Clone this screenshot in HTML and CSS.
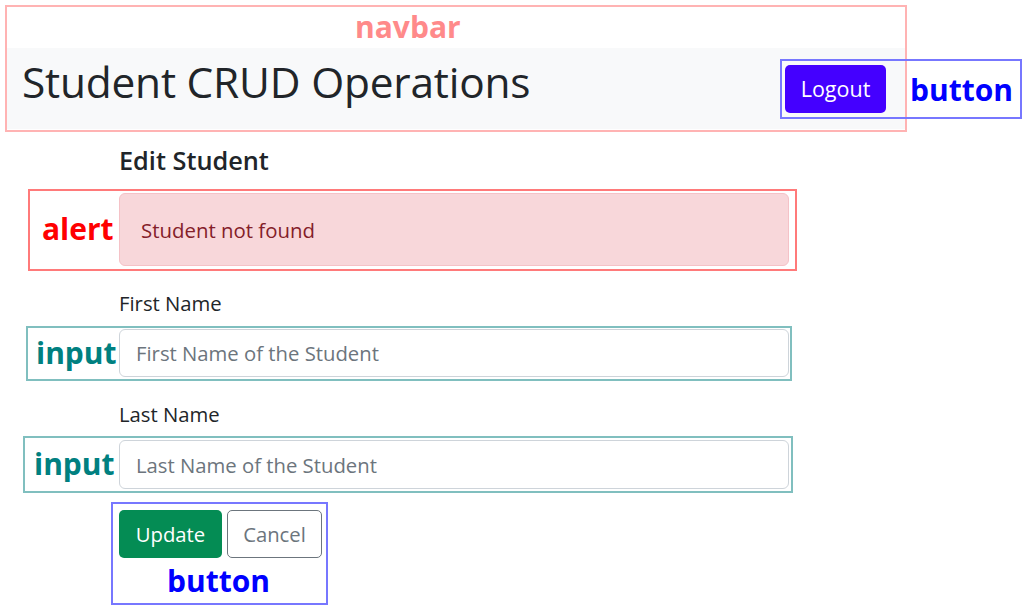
FILE: index.html
```html
<!DOCTYPE html>
<html>
<head>
<meta charset="utf-8">
<link rel="stylesheet" href="styles.css">
</head>
<body>
<div class="page">
  <nav class="navbar">
    <h1 class="brand">Student CRUD Operations</h1>
    <button class="btn btn-logout">Logout</button>
  </nav>
  <main class="content">
    <h2 class="title">Edit Student</h2>
    <div class="alert">Student not found</div>
    <label class="label">First Name</label>
    <input class="field" type="text" placeholder="First Name of the Student">
    <label class="label">Last Name</label>
    <input class="field field-last" type="text" placeholder="Last Name of the Student">
    <div class="actions">
      <button class="btn btn-update">Update</button>
      <button class="btn btn-cancel">Cancel</button>
    </div>
  </main>

  <div class="anno anno-navbar"><span class="anno-label lbl-navbar">navbar</span></div>
  <div class="anno anno-logout"><span class="anno-label lbl-logout">button</span></div>
  <div class="anno anno-alert"><span class="anno-label lbl-alert">alert</span></div>
  <div class="anno anno-input1"><span class="anno-label lbl-input1">input</span></div>
  <div class="anno anno-input2"><span class="anno-label lbl-input2">input</span></div>
  <div class="anno anno-actions"><span class="anno-label lbl-actions">button</span></div>
</div>
</body>
</html>
```

FILE: styles.css
```css
* { box-sizing: border-box; }
html, body { margin: 0; padding: 0; background: #fff; }
body {
  font-family: "Open Sans", "Noto Sans", sans-serif;
  color: #212529;
  width: 1026px;
  height: 609px;
  overflow: hidden;
}
.page {
  position: relative;
  width: 1026px;
  height: 609px;
  padding-top: 48px;
}

.navbar {
  margin-left: 7px;
  width: 898px;
  height: 81px;
  background: #f8f9fa;
  display: flex;
  align-items: center;
  justify-content: space-between;
  padding: 0 19px 0 15px;
}
.brand {
  margin: 0 0 12px 0;
  font-size: 42.4px;
  font-weight: 400;
  line-height: 1.2;
  letter-spacing: -0.2px;
}
.btn {
  font-family: inherit;
  font-size: 20.3px;
  line-height: 1.5;
  border-radius: 5px;
  border: 1px solid transparent;
  height: 48px;
  padding: 0;
  cursor: pointer;
}
.btn-logout {
  background: #4400ff;
  color: #fff;
  width: 101px;
  margin-top: 1px;
  font-size: 21.5px;
}

.content {
  margin-left: 119px;
  width: 670px;
  display: flex;
  flex-direction: column;
  align-items: flex-start;
}
.title {
  margin: 16px 0 0 0;
  font-size: 25.3px;
  font-weight: 600;
  line-height: 30px;
}
.alert {
  margin-top: 18px;
  width: 670px;
  height: 73px;
  background: #f8d7da;
  border: 1px solid #f5c2c7;
  border-radius: 6px;
  color: #842029;
  font-size: 20.4px;
  display: flex;
  align-items: center;
  padding: 0 21px;
}
.label {
  margin-top: 23px;
  font-size: 20.3px;
  line-height: 28px;
}
.field {
  margin-top: 12px;
  width: 670px;
  height: 48px;
  border: 1px solid #ced4da;
  border-radius: 6px;
  font-family: inherit;
  font-size: 20.3px;
  padding: 0 16px;
  color: #212529;
  background: #fff;
}
.field-last { height: 49px; }
.field::placeholder { color: #6c757d; }

.actions {
  margin-top: 21px;
  display: flex;
  gap: 5px;
}
.btn-update {
  background: #048c54;
  color: #fff;
  width: 103px;
}
.btn-cancel {
  background: #fff;
  color: #6c757d;
  border-color: #6c757d;
  width: 95px;
}

/* annotation overlays */
.anno {
  position: absolute;
  border: 2px solid;
  pointer-events: none;
}
.anno-label {
  position: absolute;
  font-family: "Open Sans", "Noto Sans", sans-serif;
  font-weight: 700;
  font-size: 30px;
  line-height: 1;
  white-space: nowrap;
}
.anno-navbar { left: 5px; top: 5px; width: 902px; height: 127px; border-color: #ffb3b3; }
.lbl-navbar { left: 348px; top: 5px; color: #ff8a8a; }
.anno-logout { left: 780px; top: 59px; width: 242px; height: 60px; border-color: #7777ff; }
.lbl-logout { left: 128px; top: 14px; color: #0000ff; }
.anno-alert { left: 28px; top: 189px; width: 769px; height: 82px; border-color: #ff7a7a; }
.lbl-alert { left: 12px; top: 23px; color: #ff0000; }
.anno-input1 { left: 26px; top: 326px; width: 766px; height: 55px; border-color: #80bfbf; }
.lbl-input1 { left: 8px; top: 10px; color: #008080; }
.anno-input2 { left: 23px; top: 436px; width: 770px; height: 57px; border-color: #80bfbf; }
.lbl-input2 { left: 9px; top: 11px; color: #008080; }
.anno-actions { left: 111px; top: 502px; width: 217px; height: 103px; border-color: #7777ff; }
.lbl-actions { left: 54px; top: 62px; color: #0000ff; }
```
